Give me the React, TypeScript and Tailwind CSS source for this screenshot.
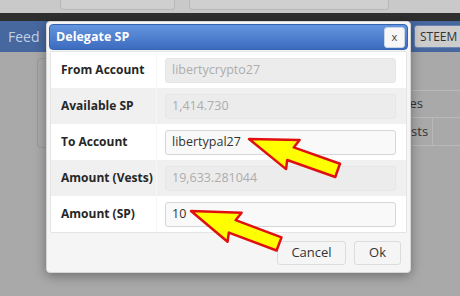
import React from "react";

const ROWS = [
  { label: "From Account", value: "libertycrypto27", disabled: true },
  { label: "Available SP", value: "1,414.730", disabled: true },
  { label: "To Account", value: "libertypal27", disabled: false },
  { label: "Amount (Vests)", value: "19,633.281044", disabled: true },
  { label: "Amount (SP)", value: "10", disabled: false },
];

function Arrow({ x, y, angle }: { x: number; y: number; angle: number }) {
  return (
    <polygon
      points="0,0 48,-16 45,-7 94,-7 94,7 43,7 45,16"
      transform={`translate(${x} ${y}) rotate(${angle})`}
      fill="#ffff00"
      stroke="#e01010"
      strokeWidth="2.5"
      strokeLinejoin="round"
    />
  );
}

export default function App() {
  return (
    <div
      className="relative w-[460px] h-[296px] overflow-hidden bg-[#a9a9a9]"
      style={{ fontFamily: "'Open Sans', 'Noto Sans', sans-serif" }}
    >
      {/* dimmed page behind */}
      <div className="h-[13px] bg-[#c9c9c9] flex gap-[14px] pl-[60px]">
        <div className="w-[115px] h-[10px] border border-t-0 border-[#b8b8b8] rounded-b-[4px] bg-[#cfcfcf]" />
        <div className="w-[200px] h-[10px] border border-t-0 border-[#b8b8b8] rounded-b-[4px] bg-[#cfcfcf]" />
      </div>
      <div className="h-[8px] bg-[#2f2f2f]" />
      <div className="h-[31px] bg-[#46689f] flex items-center justify-between">
        <span className="pl-[8px] text-[14px] text-[#c3cfe3]">Feed</span>
        <div className="h-[23px] w-[50px] mr-[-4px] bg-[#cdcdcd] border border-[#6b86b5] rounded-[3px] text-[12px] text-[#333] flex items-center pl-[5px]">
          STEEM
        </div>
      </div>
      <div className="flex justify-between">
        <div className="mt-[6px] ml-[37px] w-[12px] h-[90px] border border-[#999] rounded-[4px]" />
        <div className="w-[49px] pt-[38px] text-[13px] text-[#333]">
          <div className="h-[28px] border-y border-[#b9b9b9] flex items-center">
            <span className="ml-[-8px]">ves</span>
          </div>
          <div className="h-[28px] border-b border-[#b9b9b9] flex items-center relative">
            <span className="ml-[-15px]">Vests</span>
            <div className="absolute left-[21px] top-0 bottom-0 border-l border-[#b9b9b9]" />
          </div>
        </div>
      </div>

      {/* dialog */}
      <div className="absolute left-[46px] top-[21px] w-[365px] h-[252px] bg-[#f5f5f5] border border-[#d6d6d6] rounded-[4px] shadow-[0_3px_12px_rgba(0,0,0,0.35)] p-[2px] flex flex-col">
        <div className="h-[26px] rounded-[4px] border border-[#3463b0] bg-gradient-to-b from-[#6495de] to-[#3d6cc0] flex items-center justify-between pl-[6px] pr-[2px]">
          <span className="text-[12.5px] font-bold text-white">Delegate SP</span>
          <div className="w-[21px] h-[21px] bg-[#f7f7f7] border border-[#c7d3e8] rounded-[3px] flex items-center justify-center text-[11px] text-[#444] leading-none pb-[2px]">
            x
          </div>
        </div>
        <div className="mt-[1px] mx-[1px] bg-white border border-[#e4e4e4] rounded-[2px] flex flex-col">
          {ROWS.map((r, i) => (
            <div
              key={r.label}
              className={`h-[36px] flex items-center ${i % 2 === 1 ? "bg-[#f0f0f0]" : "bg-white"}`}
            >
              <div className="w-[106px] h-full flex items-center pl-[10px] border-r border-[#f7f7f7] text-[12px] font-bold text-[#262626] whitespace-nowrap">
                {r.label}
              </div>
              <div className="flex-1 pl-[8px] pr-[10px]">
                <div
                  className={`h-[25px] rounded-[3px] border flex items-center pl-[6px] text-[12.5px] ${
                    r.disabled
                      ? "bg-[#ececec] border-[#e6e6e6] text-[#adadad]"
                      : "bg-[#f9f9f9] border-[#d6d6d6] text-[#333]"
                  }`}
                >
                  {r.value}
                </div>
              </div>
            </div>
          ))}
        </div>
        <div className="flex-1 flex justify-end items-start gap-[8px] pt-[8px] pr-[7px]">
          <button className="w-[69px] h-[24px] bg-[#f5f5f5] border border-[#dcdcdc] rounded-[3px] text-[13px] text-[#333]">
            Cancel
          </button>
          <button className="w-[47px] h-[24px] bg-[#f5f5f5] border border-[#dcdcdc] rounded-[3px] text-[13px] text-[#333]">
            Ok
          </button>
        </div>
      </div>

      {/* callout arrows */}
      <svg className="absolute left-0 top-0" width="460" height="296">
        <Arrow x={249} y={139} angle={19.5} />
        <Arrow x={191} y={211} angle={20.5} />
      </svg>
    </div>
  );
}
